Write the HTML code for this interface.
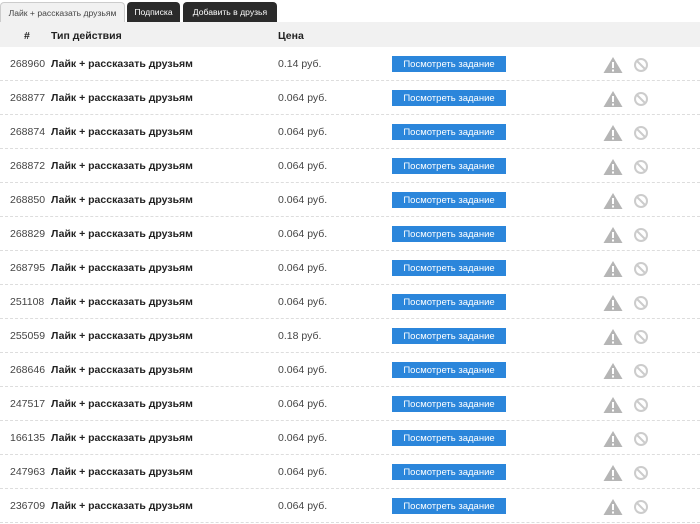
<!DOCTYPE html>
<html><head><meta charset="utf-8"><style>
body{margin:0;width:700px;height:524px;background:#fff;font-family:"Liberation Sans","DejaVu Sans",sans-serif;position:relative;overflow:hidden;font-size:10.5px;color:#333}
.tab{position:absolute;top:2px;height:20px;line-height:20px;font-size:9px;padding:0 5px;border-radius:4px 4px 0 0;box-sizing:border-box;white-space:nowrap;overflow:hidden;text-align:center}
.hdr{position:absolute;top:22px;left:0;width:700px;height:25px;background:#f1f1f1;font-weight:bold;font-size:10.5px;color:#222}
.row{position:absolute;left:0;width:700px;height:34px;border-bottom:1px dashed #ddd;box-sizing:border-box}
.row span{position:absolute;top:11px;white-space:nowrap}
.id{left:10px;color:#444}
.nm{left:51px;font-weight:bold;color:#222}
.pr{left:278px;color:#444}
.btn{position:absolute;left:392px;top:9px;width:114px;height:16px;background:#2b86db;color:#fff;font-size:9.5px;line-height:17px;text-align:center;white-space:nowrap}
svg{position:absolute}
</style></head><body>
<div class="tab" style="left:0;width:125px;background:#f1f1f1;color:#444;border:1px solid #ccc;border-bottom:none;font-size:8.6px">Лайк + рассказать друзьям</div>
<div class="tab" style="left:127px;width:53px;background:#2b2b2b;color:#fff;font-size:8.6px;padding:0">Подписка</div>
<div class="tab" style="left:183px;width:94px;background:#2b2b2b;color:#fff;font-size:8.6px;padding:0">Добавить в друзья</div>
<div class="hdr"><span style="position:absolute;left:24px;top:8px">#</span><span style="position:absolute;left:51px;top:8px">Тип действия</span><span style="position:absolute;left:278px;top:8px">Цена</span></div>
<div id="rows"></div>
<script>
var d=[["268960","0.14"],["268877","0.064"],["268874","0.064"],["268872","0.064"],["268850","0.064"],["268829","0.064"],["268795","0.064"],["251108","0.064"],["255059","0.18"],["268646","0.064"],["247517","0.064"],["166135","0.064"],["247963","0.064"],["236709","0.064"]];
var h="";d.forEach(function(r,i){h+='<div class="row" style="top:'+(47+34*i)+'px"><span class="id">'+r[0]+'</span><span class="nm">Лайк + рассказать друзьям</span><span class="pr">'+r[1]+' руб.</span><div class="btn">Посмотреть задание</div><svg style="left:603px;top:9px" width="20" height="18"><path d="M10 1L19.5 17H0.5Z" fill="#b5b5b5"/><rect x="9" y="6" width="2" height="6" fill="#fff"/><rect x="9" y="13.5" width="2" height="2" fill="#fff"/></svg><svg style="left:633px;top:10px" width="16" height="16"><circle cx="8" cy="8" r="6" fill="none" stroke="#ccc" stroke-width="2"/><line x1="4" y1="4" x2="12" y2="12" stroke="#ccc" stroke-width="2"/></svg></div>';});
document.getElementById("rows").innerHTML=h;
</script>
</body></html>
